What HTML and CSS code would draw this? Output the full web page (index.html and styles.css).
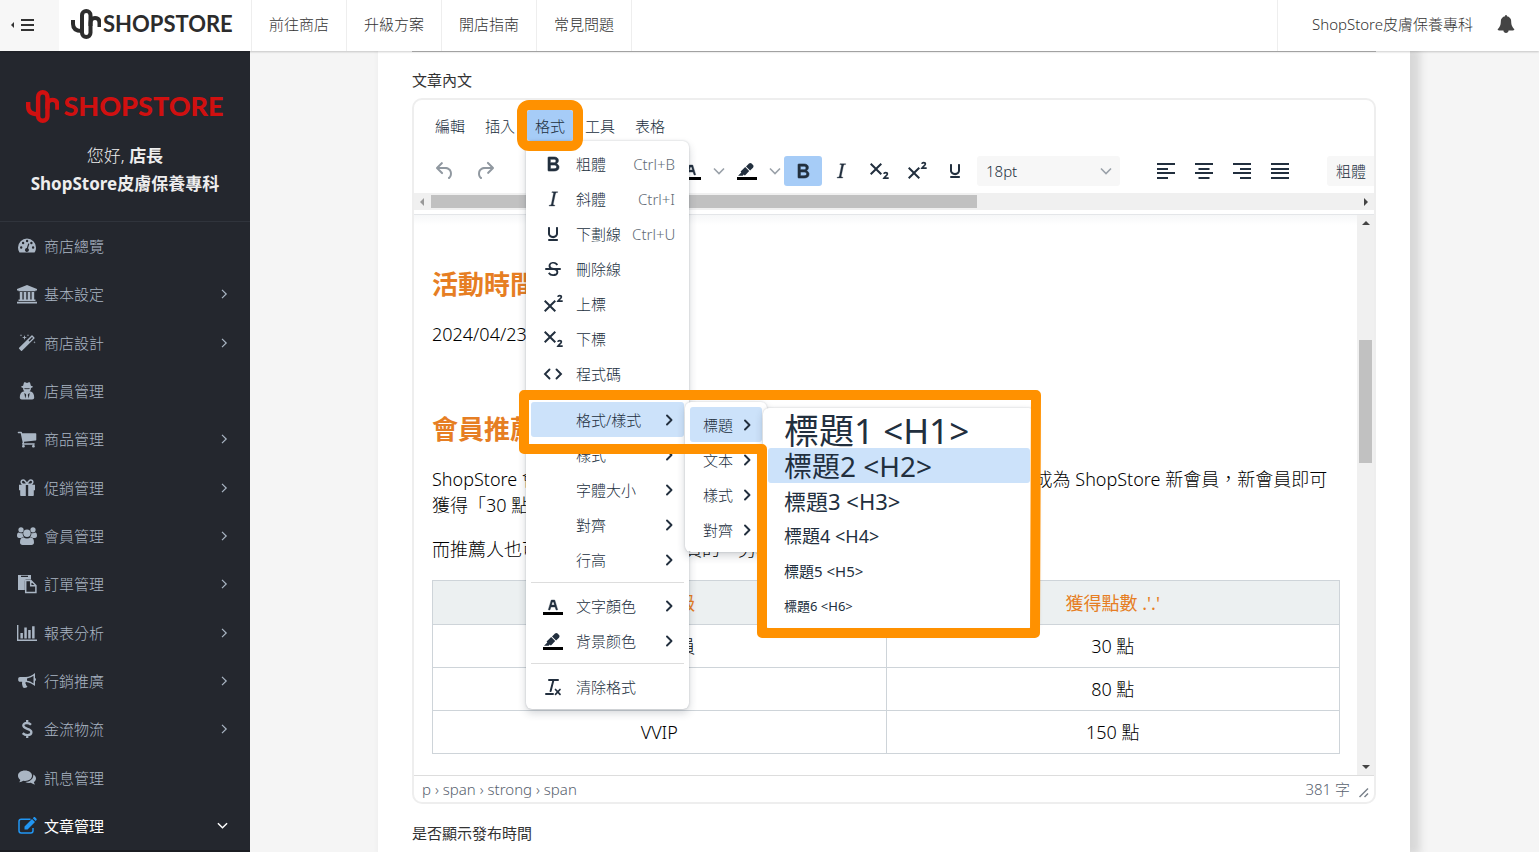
FILE: index.html
```html
<!DOCTYPE html>
<html lang="zh-Hant">
<head>
<meta charset="utf-8">
<title>文章管理 - ShopStore</title>
<link rel="stylesheet" href="styles.css">
</head>
<body>
<svg class="sprite" aria-hidden="true">
  <symbol id="mark" viewBox="0 0 30 30"><g fill="none" stroke="currentColor" stroke-width="4"><rect x="11" y="2" width="8.500" height="26" rx="4.250"/><path d="M2 11v4q0 7 9 7M19.500 17v-3q0-5 4.500-5t4.500 5v4"/></g></symbol>
  <symbol id="bell" viewBox="0 0 1792 1792"><path d="M1728 1408q0 52-38 90t-90 38h-448q0 106-75 181t-181 75-181-75-75-181h-448q-52 0-90-38t-38-90q50-42 91-88t85-119.500 74.500-158.500 50-206 19.500-260q0-152 117-282.500t307-158.500q-8-19-8-39 0-40 28-68t68-28 68 28 28 68q0 20-8 39 190 28 307 158.500t117 282.500q0 139 19.500 260t50 206 74.500 158.500 85 119.500 91 88z"/></symbol>
  <symbol id="dash" viewBox="0 0 20 20"><path fill-rule="evenodd" d="M1 11.500a9 9 0 0 1 18 0c0 2-.5 3.700-1.500 5.100H2.500A9 9 0 0 1 1 11.500zM3 11.500a1.200 1.200 0 1 0 2.400 0a1.200 1.200 0 1 0-2.400 0zM4.900 7a1.200 1.200 0 1 0 2.400 0a1.200 1.200 0 1 0-2.400 0zM8.900 5a1.200 1.200 0 1 0 2.400 0a1.200 1.200 0 1 0-2.400 0zM13.200 7a1.200 1.200 0 1 0 2.400 0a1.200 1.200 0 1 0-2.400 0zM14.900 11.500a1.200 1.200 0 1 0 2.400 0a1.200 1.200 0 1 0-2.400 0zM11.200 7.500L9.800 12a2 2 0 1 0 1.200.3l1.400-4.500z"/></symbol>
  <symbol id="bank" viewBox="0 0 20 20"><path d="M10 1l10 4v1.400h-1.500v.9h-17v-.9H0V5zM2.800 8h2.600v7.500h1.300V8h2.600v7.500h1.400V8h2.600v7.500h1.300V8h2.600v7.500h1.300V17H1.500v-1.500h1.300zM0 17.800h20V19.500H0z"/></symbol>
  <symbol id="wand" viewBox="0 0 20 20"><path fill-rule="evenodd" d="M15.500 2.500l1.900 1.900c.3.300.3.700 0 1L5 17.700c-.3.300-.7.300-1 0L2.100 15.800c-.3-.3-.3-.7 0-1L14.500 2.500c.3-.3.700-.3 1 0zM15 4l-3.500 3.500 1 1L16 5zM7.500 2l.6 1.900 1.900.6-1.900.6L7.500 7l-.6-1.900L5 4.500l1.900-.6zM4 1l.3 1 1 .3-1 .3L4 3.600l-.3-1-1-.3 1-.3zM11 1l.3 1 1 .3-1 .3-.3 1-.3-1-1-.3 1-.3zM17.500 8l.3 1 1 .3-1 .3-.3 1-.3-1-1-.3 1-.3z"/></symbol>
  <symbol id="spy" viewBox="0 0 20 20"><path fill-rule="evenodd" d="M7 1.600c1-.8 1.700.3 3 .3s2-1.100 3-.3l.9 3.200c1.300.3 2 .6 2 1 0 .5-1 .9-2 1.100 0 1.700-.4 2.700-1.300 3.500l1.300.2c2 .8 3.300 2.800 3.300 6 0 1.200-.8 2-2 2H4.800c-1.200 0-2-.8-2-2 0-3.200 1.300-5.200 3.300-6l1.300-.2C6.500 9.600 6.100 8.600 6.100 6.900c-1-.2-2-.6-2-1.100 0-.4.700-.7 2-1zM7.400 7.200v.8l2.100.2.500-.5.500.5 2.100-.2v-.8zM7.300 12l1 5.500.9-3.500-.4-1zM12.700 12l-1.500 1-.4 1 .9 3.500z"/></symbol>
  <symbol id="cart" viewBox="0 0 1792 1792"><path d="M704 1536q0 52-38 90t-90 38-90-38-38-90 38-90 90-38 90 38 38 90zm896 0q0 52-38 90t-90 38-90-38-38-90 38-90 90-38 90 38 38 90zm128-1088v512q0 24-16.500 42.500t-40.500 21.500l-1044 122q13 60 13 70 0 16-24 64h920q26 0 45 19t19 45-19 45-45 19h-1024q-26 0-45-19t-19-45q0-11 8-31.500t16-36 21.500-40 15.500-29.500l-177-823h-204q-26 0-45-19t-19-45 19-45 45-19h256q16 0 28.500 6.500t19.500 15.500 13 24.500 8 26 5.500 29.500 4.500 26h1201q26 0 45 19t19 45z"/></symbol>
  <symbol id="gift" viewBox="0 0 20 20"><path d="M2 6.800h6.800v11.200H4.200c-.6 0-1-.4-1-1v-4.700H2zM11.200 6.800H18v5.500h-1.200V17c0 .6-.4 1-1 1h-4.600z"/><path fill="none" stroke="currentColor" stroke-width="1.600" d="M10 6.200C8.500 3 7.500 2 6.300 2a2 2 0 0 0 0 4.200zM10 6.200C11.500 3 12.500 2 13.700 2a2 2 0 0 1 0 4.200z"/></symbol>
  <symbol id="users" viewBox="0 0 20 20"><circle cx="4" cy="3.800" r="2.600"/><circle cx="16" cy="3.800" r="2.600"/><circle cx="10" cy="7.200" r="3.700"/><path d="M0 9.500C0 7.500.8 6.500 1.800 6.500c1 .8 2.500 1 3.800.5 0 1.800.5 2.800 1.300 3.700-1 0-2 .4-2.700 1.200H2C.7 11.900 0 11 0 9.500zM20 9.500c0-2-.8-3-1.800-3-1 .8-2.500 1-3.800.5 0 1.800-.5 2.800-1.300 3.700 1 0 2 .4 2.700 1.200H18c1.300 0 2-.9 2-2.400zM3 16.500c0-3 1-5.200 3.400-5.200 2.300 1.700 4.900 1.700 7.200 0 2.400 0 3.400 2.200 3.400 5.200 0 1.500-1 2.500-2.500 2.500h-9C4 19 3 18 3 16.500z"/></symbol>
  <symbol id="paste" viewBox="0 0 20 20"><path d="M1 1h13v4.500H9.500c-1 0-1.700.7-1.700 1.700V16H1zM4 1.800v1.300h7V1.800z" fill-rule="evenodd"/><path fill="none" stroke="currentColor" stroke-width="1.500" d="M8.700 6.500h5.200l5 5v7H8.700zM13.700 6.500v5.200h5"/></symbol>
  <symbol id="chart" viewBox="0 0 20 20"><path d="M0 2h1.400v14.600H20V18H0zM3.400 10h2.500v5.400H3.400zM7.300 4.500h2.500v10.900H7.300zM11.200 7h2.500v8.400h-2.500zM15.100 3.300h2.500v12.100h-2.500z"/></symbol>
  <symbol id="horn" viewBox="0 0 20 20"><path fill-rule="evenodd" d="M18 2v5c1.300.3 1.300 2.800 0 3.100v5c-3-2.600-5.600-3.900-9-4.200-1 .7-.7 1.600.1 2.200-.5 1 .3 1.600 1.300 2.400-.8 1.700-3.400 1.600-4.400.9-.6-1.900-1.400-3.600-.8-5.600H3c-1 0-1.800-.8-1.800-1.800V7.800C1.200 6.800 2 6 3 6h5.500c3.500 0 6.500-1.500 9.500-4zM16.500 4.800C14.300 6.300 12.300 7.100 10 7.400v2.400c2.300.3 4.300 1.100 6.500 2.700z"/></symbol>
  <symbol id="dollar" viewBox="0 0 20 20"><path fill="none" stroke="currentColor" stroke-width="2.300" d="M14 5.800C12.800 4.600 11.500 4 9.800 4 7.900 4 6.300 4.900 6.300 6.600c0 4 8.100 2.500 8.100 6.600 0 1.800-1.700 2.900-4 2.900-2 0-3.500-.7-4.700-2M10.200 1v3M10.200 16v3"/></symbol>
  <symbol id="chat" viewBox="0 0 20 20"><path d="M8 2.500c4 0 7 2.200 7 5.200s-3 5.200-7 5.200l-1.700-.2c-1.200.9-2.600 1.400-4.200 1.600.7-.7 1-1.400 1.200-2.400C1.900 10.800 1 9.400 1 7.700c0-3 3-5.200 7-5.200zM16.300 6.500c1.700.9 2.700 2.200 2.700 3.900 0 1.500-.9 2.800-2.200 3.700.2 1 .6 1.600 1.200 2.300-1.600-.1-3-.7-4.200-1.600-2 .4-4 0-5.500-.8 4.500-.2 8.400-3 8-7.500z"/></symbol>
  <symbol id="edit" viewBox="0 0 20 20"><path fill="none" stroke="currentColor" stroke-width="1.500" d="M13.500 3.200H4.200C3 3.200 2 4.200 2 5.400v9.400c0 1.200 1 2.200 2.200 2.200h9.600c1.200 0 2.200-1 2.200-2.200V12"/><path d="M7.500 10.500L15 3l3 3-7.500 7.500h-3zM15.800 2.200l.9-.9c.4-.4 1-.4 1.400 0l1.400 1.400c.4.400.4 1 0 1.400l-.9.900z"/></symbol>
  <symbol id="right" viewBox="0 0 10 10"><path fill="none" stroke="currentColor" stroke-width="1.200" d="M3 .8L7.200 5 3 9.200"/></symbol>
  <symbol id="down" viewBox="0 0 12 12"><path fill="none" stroke="currentColor" stroke-width="1.600" d="M1 3.500l5 5 5-5"/></symbol>
  <symbol id="sub" viewBox="0 0 12 12"><path fill="none" stroke="currentColor" stroke-width="1.900" stroke-linejoin="round" stroke-linecap="round" d="M4 1.500L8.500 6 4 10.500"/></symbol>
  <symbol id="undo" viewBox="0 0 24 24"><path d="M6.400 8H12c3.700 0 6.200 2 6.800 5.100.6 2.700-.4 5.600-2.300 6.800a1 1 0 0 1-1-1.800c1.100-.6 1.800-2.700 1.400-4.600-.5-2.100-2.100-3.500-4.900-3.500H6.400l3.300 3.300a1 1 0 1 1-1.400 1.400l-5-5a1 1 0 0 1 0-1.400l5-5a1 1 0 0 1 1.400 1.400L6.400 8z"/></symbol>
  <symbol id="redo" viewBox="0 0 24 24"><path d="M17.600 10H12c-2.800 0-4.400 1.400-4.900 3.500-.4 2 .3 4 1.400 4.600a1 1 0 1 1-1 1.800c-2-1.200-2.900-4.100-2.300-6.800.6-3 3-5.100 6.800-5.100h5.600l-3.300-3.300a1 1 0 1 1 1.400-1.400l5 5a1 1 0 0 1 0 1.400l-5 5a1 1 0 0 1-1.400-1.400l3.300-3.300z"/></symbol>
  <symbol id="bold" viewBox="0 0 24 24"><path stroke="currentColor" stroke-width=".6" d="M7.800 19c-.3 0-.5 0-.6-.2l-.2-.5V5.700c0-.2 0-.4.2-.5l.6-.2h5c1.500 0 2.700.3 3.500 1 .7.6 1.100 1.400 1.100 2.500a3 3 0 0 1-.6 1.900c-.4.6-1 1-1.600 1.200.4.100.9.300 1.300.6s.8.700 1 1.200c.4.400.5 1 .5 1.600 0 1.300-.4 2.300-1.300 3-.8.7-2.100 1-3.800 1H7.800zm5-8.300c.6 0 1.200-.1 1.600-.5.4-.3.600-.7.600-1.300 0-1.100-.8-1.700-2.300-1.700H9.300v3.500h3.400zm.5 6c.7 0 1.300-.1 1.700-.4.400-.4.600-.9.600-1.500s-.2-1-.7-1.400c-.4-.3-1-.4-2-.4H9.400v3.800h4z"/></symbol>
  <symbol id="italic" viewBox="0 0 24 24"><path stroke="currentColor" stroke-width=".3" d="M16.700 4.700l-.1.900h-.3c-.6 0-1 0-1.400.3-.3.300-.4.600-.5 1.100l-2.100 9.800v.6c0 .5.400.8 1.400.8h.2l-.2.800H8l.2-.8h.2c1.100 0 1.800-.5 2-1.500l2-9.800.1-.5c0-.6-.4-.8-1.400-.8h-.3l.2-.9h5.700z"/></symbol>
  <symbol id="under" viewBox="0 0 24 24"><path d="M16 5c.6 0 1 .4 1 1v5.500a4 4 0 0 1-.4 1.800l-1 1.400a5.300 5.300 0 0 1-5.500 1 5 5 0 0 1-1.600-1c-.5-.4-.8-.9-1.100-1.400a4 4 0 0 1-.4-1.800V6c0-.6.400-1 1-1s1 .4 1 1v5.500c0 .3 0 .6.200 1l.6.700a3.300 3.300 0 0 0 2.200.8 3.400 3.400 0 0 0 2.200-.8c.3-.2.400-.5.600-.8l.2-.9V6c0-.6.400-1 1-1zM8 17h8c.6 0 1 .4 1 1s-.4 1-1 1H8a1 1 0 0 1 0-2z"/></symbol>
  <symbol id="strike" viewBox="0 0 24 24"><path d="M15.600 8.500c-.5-.7-1-1.100-1.300-1.300-.6-.4-1.300-.6-2-.6-2.700 0-2.800 1.700-2.800 2.100 0 1.600 1.800 2 3.200 2.300 4.400.9 4.600 2.800 4.600 3.900 0 1.400-.7 4.100-5 4.100A6.200 6.200 0 0 1 7 16.400l1.500-1.100c.4.600 1.600 2 3.700 2 1.600 0 2.500-.4 3-1.200.4-.8.300-2-.8-2.600-.7-.4-1.600-.7-2.900-1-1-.2-3.900-.8-3.900-3.600C7.600 6 10.300 5 12.400 5c2.900 0 4.200 1.600 4.700 2.400z"/><path d="M5 11h14a1 1 0 0 1 0 2H5a1 1 0 0 1 0-2z"/></symbol>
  <symbol id="sup" viewBox="0 0 24 24"><path d="M15 9.400L10.400 14l4.600 4.600-1.400 1.400L9 15.400 4.400 20 3 18.600 7.600 14 3 9.400 4.400 8 9 12.600 13.600 8z"/><path fill="none" stroke="currentColor" stroke-width="1.600" d="M16.700 4.800c.4-.9 1.100-1.200 1.900-1.200 1.100 0 1.800.5 1.800 1.500 0 1.500-2.400 2.200-3.500 4h4.800"/></symbol>
  <symbol id="subs" viewBox="0 0 24 24"><path d="M15 5.400L10.400 10l4.600 4.600-1.400 1.400L9 11.400 4.400 16 3 14.600 7.600 10 3 5.400 4.400 4 9 8.600 13.600 4z"/><path fill="none" stroke="currentColor" stroke-width="1.600" d="M16.700 14.800c.4-.9 1.100-1.200 1.900-1.200 1.100 0 1.800.5 1.800 1.500 0 1.500-2.400 2.200-3.500 4h4.800"/></symbol>
  <symbol id="code" viewBox="0 0 24 24"><path fill="none" stroke="currentColor" stroke-width="1.900" stroke-linecap="round" d="M8.500 7.500L4 12l4.500 4.500M15.500 7.500L20 12l-4.500 4.500"/></symbol>
  <symbol id="color" viewBox="0 0 24 24"><path fill="#000" d="M2 18h20v3H2z"/><path stroke="currentColor" stroke-width=".4" d="M8.700 16h-.8a.5.500 0 0 1-.5-.6l2.700-9c.1-.3.300-.4.500-.4h2.800c.2 0 .4.100.5.400l2.700 9a.5.500 0 0 1-.5.600h-.8a.5.500 0 0 1-.4-.4l-.7-2.200c0-.3-.3-.4-.5-.4h-3.400c-.2 0-.4.100-.5.400l-.7 2.200c0 .3-.2.400-.4.400zm2.600-7.600l-.6 2a.5.500 0 0 0 .5.600h1.600a.5.500 0 0 0 .5-.6l-.6-2c0-.3-.3-.4-.5-.4h-.4c-.2 0-.4.100-.5.400z"/></symbol>
  <symbol id="mark-pen" viewBox="0 0 24 24"><path fill="#000" d="M2 18h20v3H2z"/><path d="M7.700 16.700H3l3.300-3.300-.7-.8L10.200 8l4 4.100-4 4.200c-.2.200-.6.200-.8 0l-.6-.7zM11 7.400l3-2.900a2 2 0 0 1 2.600 0L18 6c.7.7.7 2 0 2.700l-2.900 2.900z"/></symbol>
  <symbol id="clear" viewBox="0 0 24 24"><path d="M13.200 6l-2.600 10.200a1 1 0 0 1-1 .8h-.2a.8.800 0 0 1-.8-1L11.200 6H8a1 1 0 1 1 0-2h9a1 1 0 0 1 0 2zM5 18h7a1 1 0 0 1 0 2H5a1 1 0 0 1 0-2z"/><path fill="none" stroke="currentColor" stroke-width="1.700" stroke-linecap="round" d="M14.500 14.500l4.500 4.800M19 14.500l-4.500 4.800"/></symbol>
  <symbol id="al" viewBox="0 0 24 24"><path d="M3 4h18v2H3zM3 9h11v2H3zM3 13h18v2H3zM3 18h11v2H3z"/></symbol>
  <symbol id="ac" viewBox="0 0 24 24"><path d="M3 4h18v2H3zM6.500 9h11v2h-11zM3 13h18v2H3zM6.500 18h11v2h-11z"/></symbol>
  <symbol id="ar" viewBox="0 0 24 24"><path d="M3 4h18v2H3zM10 9h11v2H10zM3 13h18v2H3zM10 18h11v2H10z"/></symbol>
  <symbol id="aj" viewBox="0 0 24 24"><path d="M3 4h18v2H3zM3 9h18v2H3zM3 13h18v2H3zM3 18h18v2H3z"/></symbol>
</svg>

<header class="topbar">
  <button class="toggle" type="button" aria-label="選單"><span class="caret-left"></span><span class="bars"></span></button>
  <a class="brand" href="#"><svg class="brand-mark"><use href="#mark"/></svg><span>SHOPSTORE</span></a>
  <nav class="toplinks"><a href="#">前往商店</a><a href="#">升級方案</a><a href="#">開店指南</a><a href="#">常見問題</a></nav>
  <div class="account"><a href="#">ShopStore皮膚保養專科</a><button type="button" aria-label="通知"><svg class="bell"><use href="#bell"/></svg></button></div>
</header>

<div class="shell">
  <aside class="sidebar">
    <div class="profile">
      <div class="logo"><svg class="logo-mark"><use href="#mark"/></svg><span>SHOPSTORE</span></div>
      <p>您好, <b>店長</b></p>
      <p><b>ShopStore皮膚保養專科</b></p>
    </div>
    <nav class="side">
      <a href="#"><svg><use href="#dash"/></svg><span>商店總覽</span></a>
      <a href="#"><svg><use href="#bank"/></svg><span>基本設定</span><svg class="arrow"><use href="#right"/></svg></a>
      <a href="#"><svg><use href="#wand"/></svg><span>商店設計</span><svg class="arrow"><use href="#right"/></svg></a>
      <a href="#"><svg><use href="#spy"/></svg><span>店員管理</span></a>
      <a href="#"><svg><use href="#cart"/></svg><span>商品管理</span><svg class="arrow"><use href="#right"/></svg></a>
      <a href="#"><svg><use href="#gift"/></svg><span>促銷管理</span><svg class="arrow"><use href="#right"/></svg></a>
      <a href="#"><svg><use href="#users"/></svg><span>會員管理</span><svg class="arrow"><use href="#right"/></svg></a>
      <a href="#"><svg><use href="#paste"/></svg><span>訂單管理</span><svg class="arrow"><use href="#right"/></svg></a>
      <a href="#"><svg><use href="#chart"/></svg><span>報表分析</span><svg class="arrow"><use href="#right"/></svg></a>
      <a href="#"><svg><use href="#horn"/></svg><span>行銷推廣</span><svg class="arrow"><use href="#right"/></svg></a>
      <a href="#"><svg><use href="#dollar"/></svg><span>金流物流</span><svg class="arrow"><use href="#right"/></svg></a>
      <a href="#"><svg><use href="#chat"/></svg><span>訊息管理</span></a>
      <a href="#" class="current"><svg><use href="#edit"/></svg><span>文章管理</span><svg class="arrow open"><use href="#down"/></svg></a>
    </nav>
  </aside>

  <main class="page">
    <section class="card">
      <div class="rule"></div>
      <h2 class="label">文章內文</h2>
      <div class="editor">
        <div class="menubar">
          <button type="button">編輯</button>
          <button type="button">插入</button>
          <div class="menu-anchor">
            <button type="button" class="active">格式</button>
            <div class="menu main-menu" role="menu">
              <button type="button" class="item"><svg><use href="#bold"/></svg><span>粗體</span><kbd>Ctrl+B</kbd></button>
              <button type="button" class="item"><svg><use href="#italic"/></svg><span>斜體</span><kbd>Ctrl+I</kbd></button>
              <button type="button" class="item"><svg><use href="#under"/></svg><span>下劃線</span><kbd>Ctrl+U</kbd></button>
              <button type="button" class="item"><svg><use href="#strike"/></svg><span>刪除線</span></button>
              <button type="button" class="item"><svg><use href="#sup"/></svg><span>上標</span></button>
              <button type="button" class="item"><svg><use href="#subs"/></svg><span>下標</span></button>
              <button type="button" class="item"><svg><use href="#code"/></svg><span>程式碼</span></button>
              <hr>
              <div class="sub-anchor">
                <button type="button" class="item on"><i></i><span>格式/樣式</span><svg class="more"><use href="#sub"/></svg></button>
                <div class="menu second-menu" role="menu">
                  <div class="sub-anchor">
                    <button type="button" class="item on"><span>標題</span><svg class="more"><use href="#sub"/></svg></button>
                    <div class="menu third-menu" role="menu">
                      <button type="button" class="item h1">標題1 &lt;H1&gt;</button>
                      <button type="button" class="item h2 on">標題2 &lt;H2&gt;</button>
                      <button type="button" class="item h3">標題3 &lt;H3&gt;</button>
                      <button type="button" class="item h4">標題4 &lt;H4&gt;</button>
                      <button type="button" class="item h5">標題5 &lt;H5&gt;</button>
                      <button type="button" class="item h6">標題6 &lt;H6&gt;</button>
                    </div>
                  </div>
                  <button type="button" class="item"><span>文本</span><svg class="more"><use href="#sub"/></svg></button>
                  <button type="button" class="item"><span>樣式</span><svg class="more"><use href="#sub"/></svg></button>
                  <button type="button" class="item"><span>對齊</span><svg class="more"><use href="#sub"/></svg></button>
                </div>
                <svg class="outline" viewBox="0 0 522 248" aria-hidden="true"><path d="M5 5H517L516 243H243V59H5z"/></svg>
              </div>
              <button type="button" class="item"><i></i><span>樣式</span><svg class="more"><use href="#sub"/></svg></button>
              <button type="button" class="item"><i></i><span>字體大小</span><svg class="more"><use href="#sub"/></svg></button>
              <button type="button" class="item"><i></i><span>對齊</span><svg class="more"><use href="#sub"/></svg></button>
              <button type="button" class="item"><i></i><span>行高</span><svg class="more"><use href="#sub"/></svg></button>
              <hr>
              <button type="button" class="item"><svg><use href="#color"/></svg><span>文字顏色</span><svg class="more"><use href="#sub"/></svg></button>
              <button type="button" class="item"><svg><use href="#mark-pen"/></svg><span>背景颜色</span><svg class="more"><use href="#sub"/></svg></button>
              <hr>
              <button type="button" class="item"><svg><use href="#clear"/></svg><span>清除格式</span></button>
            </div>
            <div class="ring"></div>
          </div>
          <button type="button">工具</button>
          <button type="button">表格</button>
        </div>

        <div class="toolbar">
          <div class="group history"><button type="button" aria-label="復原"><svg><use href="#undo"/></svg></button><button type="button" aria-label="重做"><svg><use href="#redo"/></svg></button></div>
          <div class="group marks">
            <button type="button" aria-label="文字顏色"><svg><use href="#color"/></svg></button><button type="button" class="chev" aria-label="選擇文字顏色"><svg><use href="#down"/></svg></button>
            <button type="button" aria-label="背景顏色"><svg><use href="#mark-pen"/></svg></button><button type="button" class="chev" aria-label="選擇背景顏色"><svg><use href="#down"/></svg></button>
            <button type="button" class="active" aria-label="粗體"><svg><use href="#bold"/></svg></button>
            <button type="button" aria-label="斜體"><svg><use href="#italic"/></svg></button>
            <button type="button" aria-label="下標"><svg><use href="#subs"/></svg></button>
            <button type="button" aria-label="上標"><svg><use href="#sup"/></svg></button>
            <button type="button" aria-label="底線"><svg><use href="#under"/></svg></button>
          </div>
          <div class="size"><select aria-label="字體大小"><option>18pt</option></select><svg><use href="#down"/></svg></div>
          <div class="group aligns">
            <button type="button" aria-label="靠左"><svg><use href="#al"/></svg></button>
            <button type="button" aria-label="置中"><svg><use href="#ac"/></svg></button>
            <button type="button" aria-label="靠右"><svg><use href="#ar"/></svg></button>
            <button type="button" aria-label="左右對齊"><svg><use href="#aj"/></svg></button>
          </div>
          <button type="button" class="format">粗體</button>
        </div>
        <div class="hscroll"><span class="tri left"></span><div class="htrack"><div class="hthumb"></div></div><span class="tri right"></span></div>

        <div class="body">
          <article class="content">
            <h3>活動時間</h3>
            <p>2024/04/23 起</p>
            <h3>會員推薦活動</h3>
            <p class="wide">ShopStore 會員推薦好友加入, 分享專屬推薦連結，好友透過您的連結點註冊成為 ShopStore 新會員，新會員即可獲得「30 點」購物金。</p>
            <p>而推薦人也可獲得點數，依推薦員的，另享</p>
            <table>
              <thead><tr><th>會員等級</th><th>獲得點數 .'.'</th></tr></thead>
              <tbody>
                <tr><td>一般會員</td><td>30 點</td></tr>
                <tr><td>VIP</td><td>80 點</td></tr>
                <tr><td>VVIP</td><td>150 點</td></tr>
              </tbody>
            </table>
          </article>
          <div class="vscroll"><span class="tri up"></span><div class="vtrack"><div class="vthumb"></div></div><span class="tri downward"></span></div>
        </div>
        <footer class="status"><span>p › span › strong › span</span><span class="count">381 字</span><svg class="grip" viewBox="0 0 12 12"><path d="M1.500 11L10 2.500M6.500 11L10 7.500"/></svg></footer>
      </div>
      <h2 class="label after">是否顯示發布時間</h2>
    </section>
  </main>
</div>
</body>
</html>
```
FILE: styles.css
```css
* { box-sizing: border-box; }
body {
  margin: 0;
  height: 100vh;
  overflow: hidden;
  display: flex;
  flex-direction: column;
  background: #f5f5f5;
  color: #333;
  font: 300 15px/20px "Noto Sans", "Noto Sans CJK TC", sans-serif;
}
button, select, kbd { font: inherit; color: inherit; }
button { border: 0; background: none; padding: 0; }
a { color: inherit; text-decoration: none; }
svg { fill: currentColor; flex: none; }
.sprite { position: absolute; width: 0; height: 0; }

.topbar {
  flex: none;
  display: flex;
  height: 51px;
  background: #fff;
  box-shadow: 0 1px 2px rgba(0, 0, 0, .2);
  position: relative;
  z-index: 1;
}
.toggle { width: 59px; background: #f7f7f7; display: flex; align-items: center; gap: 7px; padding: 0 0 2px 11px; }
.caret-left { border: 3px solid transparent; border-left: 0; border-right-color: #333; }
.bars { width: 13px; height: 12px; border-top: 2px solid #333; border-bottom: 2px solid #333; display: flex; align-items: center; }
.bars::before { content: ""; width: 100%; height: 2px; background: #333; }
.brand { width: 192px; display: flex; align-items: center; gap: 2px; padding: 0 0 4px 12px; color: #2c2c2c; font: 700 22px/30px Lato, sans-serif; }
.brand-mark { width: 30px; height: 30px; }
.toplinks { display: flex; border-left: 1px solid #eee; }
.toplinks a { padding: 14px 17px 0 17px; border-right: 1px solid #eee; }
.account { margin-left: auto; display: flex; align-items: center; gap: 24px; padding: 0 24px 4px 34px; border-left: 1px solid #eee; }
.account button { height: 20px; }
.bell { width: 18px; height: 18px; color: #444; display: block; }

.shell { flex: 1; min-height: 0; display: flex; }
.sidebar { width: 250px; flex: none; display: flex; flex-direction: column; background: #24272e; color: #aab6c4; border-bottom: 2px solid #1b1d22; }
.profile { padding: 38px 0 23px; border-bottom: 1px solid #30343c; text-align: center; color: #eee; font-size: 17px; line-height: 28px; }
.profile p { margin: 0; }
.profile b { font-weight: 700; }
.logo { display: flex; justify-content: center; align-items: center; gap: 4px; margin-bottom: 19px; color: #d01010; font: 900 27px/34px Lato, sans-serif; }
.logo-mark { width: 33px; height: 33px; }
.side { flex: 1; display: grid; grid-auto-rows: minmax(48px, 1fr); }
.side a { display: flex; align-items: center; gap: 7px; padding: 0 20px 0 17px; }
.side svg { width: 20px; height: 20px; }
.side .arrow { width: 12px; height: 10px; margin-left: auto; }
.side .open { width: 11px; height: 11px; margin-right: 2px; color: #fff; }
.side .current { color: #fff; font-weight: 400; }
.side .current svg:first-child { color: #2196f3; }

.page { flex: 1; min-width: 0; padding: 0 129px 0 128px; }
.card { height: 100%; padding: 0 34px; background: #fff; box-shadow: 7px 0 8px 3px #d8d8d8; clip-path: inset(0 -30px 0 -4px); }
.rule { height: 1px; background: #bbb; }
.label { margin: 0; padding: 18px 0 8px; font-size: 15px; line-height: 20px; font-weight: 400; }
.editor { border: 2px solid #eee; border-radius: 10px; color: #222f3e; }

.menubar { display: flex; gap: 4px; padding: 10px 13px 0; }
.menubar > button, .menu-anchor > button { height: 31px; padding: 0 8px; border-radius: 3px; }
.menu-anchor { position: relative; z-index: 2; }
.menu-anchor > .active { background: #a6ccf7; }
.ring { position: absolute; inset: -10px; border: 10px solid #ff9100; border-radius: 12px; pointer-events: none; }
.menu { position: absolute; background: #fff; border-radius: 6px; padding: 5px; box-shadow: 0 0 2px rgba(34, 47, 62, .25), 0 4px 8px rgba(34, 47, 62, .2); }
.main-menu { top: 31px; left: -1px; width: 163px; }
.item { display: flex; align-items: center; width: 100%; height: 35px; border-radius: 3px; gap: 11px; white-space: nowrap; text-align: left; }
.main-menu > .item, .main-menu > .sub-anchor > .item { padding: 0 9px 0 10px; }
.item svg, .item i { width: 24px; height: 24px; flex: none; }
.item kbd { margin-left: auto; color: #626b76; }
.item .more { width: 12px; height: 12px; margin-left: auto; }
.item.on { background: #cce2fa; }
.menu hr { margin: 5px 0; border: 0; border-top: 1px solid #ddd; }
.sub-anchor { position: relative; }
.second-menu { left: 154px; top: 0; width: 82px; }
.second-menu .item { padding: 0 9px 0 13px; gap: 4px; }
.third-menu { left: 73px; top: 1px; width: 272px; padding: 5px; }
.third-menu .item { padding: 0 16px; font-weight: 400; }
.third-menu .h1 { font-size: 35px; }
.third-menu .h2 { font-size: 28px; }
.third-menu .h3 { font-size: 22px; }
.third-menu .h4 { font-size: 18px; }
.third-menu .h5 { font-size: 15px; }
.third-menu .h6 { font-size: 13px; }
.outline { position: absolute; left: -12px; top: -12px; width: 522px; height: 248px; pointer-events: none; overflow: visible; }
.outline path { fill: none; stroke: #ff9100; stroke-width: 10; stroke-linejoin: round; }

.toolbar { display: flex; align-items: center; height: 52px; padding: 7px 0 0 12px; overflow: hidden; }
.group { display: flex; }
.group button { width: 38px; height: 30px; display: grid; place-items: center; border-radius: 3px; }
.group svg { width: 24px; height: 24px; }
.group .chev { width: 18px; color: #9aa1a9; }
.group .chev svg { width: 12px; height: 12px; }
.group .active { background: #a6ccf7; }
.history { gap: 2px; color: #9098a0; }
.marks { margin-left: 168px; }
.size { display: flex; align-items: center; width: 143px; height: 30px; margin-left: 3px; padding-right: 8px; background: #f7f7f7; border-radius: 3px; flex: none; }
.size select { appearance: none; flex: 1; border: 0; background: none; padding: 0 9px; }
.size svg { width: 12px; height: 12px; color: #9aa1a9; }
.aligns { margin-left: 27px; }
.format { margin-left: 28px; padding: 0 9px; height: 30px; background: #f7f7f7; border-radius: 3px 0 0 3px; flex: none; }

.hscroll { display: flex; align-items: center; justify-content: space-between; height: 17px; padding: 0 6px; background: #f0f0f0; margin-bottom: 4px; }
.htrack { flex: 1; margin: 0 7px; }
.hthumb { width: 59%; height: 13px; background: #c1c1c1; }
.tri { border: 4px solid transparent; }
.left { border-left: 0; border-right-color: #999; }
.right { border-right: 0; border-left-color: #444; }
.up { border-top: 0; border-bottom-color: #444; }
.downward { border-bottom: 0; border-top-color: #444; }

.body { display: flex; border-top: 1px solid #e4e6e9; background: linear-gradient(#f6f7f8, #fff 10px); border-bottom: 1px solid #ddd; }
.content { flex: 1; min-width: 0; padding: 51px 17px 21px 18px; color: #000; font-size: 18px; line-height: 26px; }
.content h3 { margin: 0; color: #e67e23; font-size: 26px; line-height: 36px; font-weight: 700; }
.content p { margin: 0; padding: 18px 0; }
.content h3 + p { padding: 19px 0 64px; }
.content h3 + .wide { padding: 19px 0 0; }
.content table { width: 100%; border-collapse: collapse; text-align: center; }
.content th, .content td { width: 50%; height: 43px; padding: 0; border: 1px solid #ced4d9; font-weight: 300; }
.content th { background: #ecf0f1; color: #e67e23; font-weight: 400; height: 44px; }
.vscroll { width: 17px; display: flex; flex-direction: column; align-items: center; padding: 6px 0; background: #f0f0f0; }
.vtrack { flex: 1; width: 13px; padding-top: 115px; }
.vthumb { height: 123px; background: #c1c1c1; }
.status { display: flex; align-items: center; height: 26px; padding: 0 4px 0 8px; color: #58626e; }
.count { margin-left: auto; }
.grip { width: 12px; height: 12px; margin: 6px 0 0 8px; fill: none; stroke: #7a828b; stroke-width: 1.500; }
.after { padding-top: 19px; }
```
